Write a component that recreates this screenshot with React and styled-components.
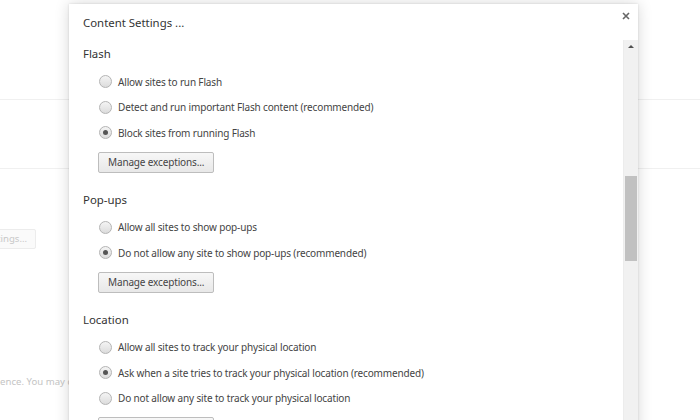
import React from "react";
import styled, { createGlobalStyle } from "styled-components";

const Global = createGlobalStyle`
  html, body { margin: 0; padding: 0; background: #ffffff; }
  body { width: 700px; height: 420px; overflow: hidden;
    font-family: "Noto Sans", "Open Sans", sans-serif; }
`;

const Page = styled.div`
  width: 700px;
  height: 420px;
  position: relative;
  overflow: hidden;
  background: #fff;
`;

const Backdrop = styled.div`
  display: flex;
  flex-direction: column;
  width: 700px;
`;

const BgRow = styled.div`
  height: ${(p) => p.h}px;
  border-bottom: ${(p) => (p.line ? "1px solid #f0f0f0" : "none")};
  display: flex;
  align-items: ${(p) => p.align || "center"};
  margin-left: ${(p) => p.shift || 0}px;
`;

const GhostButton = styled.div`
  height: 18px;
  padding: 0 8px;
  border: 1px solid #ececec;
  border-radius: 2px;
  background: #fafafa;
  color: #c8c8c8;
  font-size: 9.6px;
  line-height: 18px;
  white-space: nowrap;
`;

const GhostText = styled.div`
  color: #c4c4c4;
  font-size: 9.6px;
  white-space: nowrap;
`;

const Dialog = styled.div`
  position: absolute;
  left: 69px;
  top: 4px;
  width: 569px;
  height: 440px;
  background: #fff;
  box-shadow: 0 0 14px rgba(0, 0, 0, 0.16), 0 0 2px rgba(0, 0, 0, 0.12);
  display: flex;
  flex-direction: column;
`;

const Header = styled.div`
  height: 36px;
  display: flex;
  align-items: center;
  justify-content: space-between;
  padding: 0 5px 0 14px;
`;

const Title = styled.div`
  font-size: 11.4px;
  color: #333;
  margin-top: 1px;
`;

const Close = styled.div`
  width: 14px;
  height: 14px;
  display: flex;
  align-items: center;
  justify-content: center;
  margin-top: -12px;
`;

const Body = styled.div`
  flex: 1;
  display: flex;
  min-height: 0;
`;

const Content = styled.div`
  flex: 1;
  padding: 4px 0 0 14px;
  display: flex;
  flex-direction: column;
`;

const Section = styled.section`
  display: flex;
  flex-direction: column;
  margin-bottom: 17px;
`;

const Heading = styled.div`
  font-size: 11.4px;
  color: #333;
  height: 20px;
  line-height: 20px;
  margin-bottom: 5px;
`;

const Option = styled.label`
  display: flex;
  align-items: center;
  height: 25.5px;
  padding-left: 16px;
  font-size: 10px;
  letter-spacing: -0.15px;
  color: #444;
`;

const Radio = styled.span`
  width: 11px;
  height: 11px;
  border-radius: 50%;
  border: 1px solid #b4b4b4;
  background: linear-gradient(#f4f4f4, #dcdcdc);
  margin-right: 6px;
  display: flex;
  align-items: center;
  justify-content: center;
  flex-shrink: 0;
  &::after {
    content: "";
    width: 5px;
    height: 5px;
    border-radius: 50%;
    background: #555;
    display: ${(p) => (p.checked ? "block" : "none")};
  }
`;

const Button = styled.div`
  margin: 6px 0 0 15px;
  align-self: flex-start;
  height: 19px;
  padding: 0 9px;
  border: 1px solid #bdbdbd;
  border-radius: 2px;
  background: linear-gradient(#f7f7f7, #e8e8e8);
  font-size: 10px;
  letter-spacing: -0.15px;
  color: #444;
  line-height: 19px;
  white-space: nowrap;
`;

const Scrollbar = styled.div`
  width: 14px;
  background: #f1f1f1;
  border-left: 1px solid #ececec;
  display: flex;
  flex-direction: column;
  align-items: center;
`;

const Arrow = styled.div`
  width: 0;
  height: 0;
  margin-top: 5px;
  border-left: 3px solid transparent;
  border-right: 3px solid transparent;
  border-bottom: 3px solid #505050;
`;

const Thumb = styled.div`
  width: 12px;
  height: 85px;
  background: #c1c1c1;
  margin-top: 128px;
`;

const sections = [
  {
    title: "Flash",
    options: [
      ["Allow sites to run Flash", false],
      ["Detect and run important Flash content (recommended)", false],
      ["Block sites from running Flash", true],
    ],
  },
  {
    title: "Pop-ups",
    options: [
      ["Allow all sites to show pop-ups", false],
      ["Do not allow any site to show pop-ups (recommended)", true],
    ],
  },
  {
    title: "Location",
    options: [
      ["Allow all sites to track your physical location", false],
      ["Ask when a site tries to track your physical location (recommended)", true],
      ["Do not allow any site to track your physical location", false],
    ],
  },
];

export default function App() {
  return (
    <Page>
      <Global />
      <Backdrop>
        <BgRow h={99} line />
        <BgRow h={68} line />
        <BgRow h={80} shift={-64} align="flex-end">
          <GhostButton>Content settings...</GhostButton>
        </BgRow>
        <BgRow h={139} shift={-51} align="flex-end">
          <GhostText>your experience. You may change</GhostText>
        </BgRow>
      </Backdrop>
      <Dialog>
        <Header>
          <Title>Content Settings ...</Title>
          <Close>
            <svg width="8" height="8" viewBox="0 0 8 8">
              <path d="M1 1L7 7M7 1L1 7" stroke="#666" strokeWidth="1.6" />
            </svg>
          </Close>
        </Header>
        <Body>
          <Content>
            {sections.map((s) => (
              <Section key={s.title}>
                <Heading>{s.title}</Heading>
                {s.options.map(([t, c]) => (
                  <Option key={t}>
                    <Radio checked={c} />
                    {t}
                  </Option>
                ))}
                <Button>Manage exceptions...</Button>
              </Section>
            ))}
          </Content>
          <Scrollbar>
            <Arrow />
            <Thumb />
          </Scrollbar>
        </Body>
      </Dialog>
    </Page>
  );
}
